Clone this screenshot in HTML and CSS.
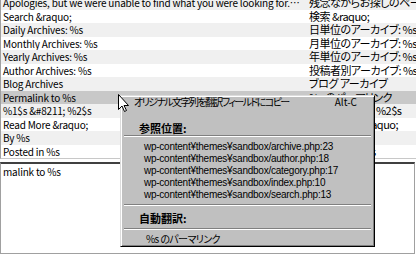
FILE: index.html
```html
<!DOCTYPE html>
<html lang="ja">
<head>
    <meta charset="UTF-8">
    <meta name="viewport" content="width=device-width, initial-scale=1.0">
    <title>翻訳エディタ</title>
    <link rel="stylesheet" href="styles.css">
</head>
<body>
    <div class="editor-window">
        <div class="string-list">
            <div class="row alt"><span class="original">Apologies, but we were unable to find what you were looking for. Perhaps searching will help.</span><span class="translation">残念ながらお探しのページが見つかりませんでした。</span></div>
            <div class="row"><span class="original">Search &amp;raquo;</span><span class="translation">検索 &amp;raquo;</span></div>
            <div class="row alt"><span class="original">Daily Archives: %s</span><span class="translation">日単位のアーカイブ: %s</span></div>
            <div class="row"><span class="original">Monthly Archives: %s</span><span class="translation">月単位のアーカイブ: %s</span></div>
            <div class="row alt"><span class="original">Yearly Archives: %s</span><span class="translation">年単位のアーカイブ: %s</span></div>
            <div class="row"><span class="original">Author Archives: %s</span><span class="translation">投稿者別アーカイブ: %s</span></div>
            <div class="row alt"><span class="original">Blog Archives</span><span class="translation">ブログ アーカイブ</span></div>
            <div class="row selected"><span class="original">Permalink to %s</span><span class="translation">%s のパーマリンク</span></div>
            <div class="row alt"><span class="original">%1$s &amp;#8211; %2$s</span><span class="translation">%1$s &amp;#8211; %2$s</span></div>
            <div class="row"><span class="original">Read More &amp;raquo;</span><span class="translation">続きを読む &amp;raquo;</span></div>
            <div class="row alt"><span class="original">By %s</span><span class="translation">投稿者: %s</span></div>
            <div class="row"><span class="original">Posted in %s</span><span class="translation">カテゴリー: %s</span></div>
        </div>
        <div class="text-field">malink to %s</div>

        <div class="context-menu">
            <div class="menu-item"><span>オリジナル文字列を翻訳フィールドにコピー</span><span class="shortcut">Alt-C</span></div>
            <div class="menu-heading first">参照位置:</div>
            <div class="menu-separator"></div>
            <div class="menu-paths">
                <div>wp-content¥themes¥sandbox/archive.php:23</div>
                <div>wp-content¥themes¥sandbox/author.php:18</div>
                <div>wp-content¥themes¥sandbox/category.php:17</div>
                <div>wp-content¥themes¥sandbox/index.php:10</div>
                <div>wp-content¥themes¥sandbox/search.php:13</div>
            </div>
            <div class="menu-separator"></div>
            <div class="menu-heading">自動翻訳:</div>
            <div class="menu-separator"></div>
            <div class="menu-item suggestion">%s のパーマリンク</div>
        </div>

        <svg class="cursor" width="12" height="19" viewBox="0 0 12 19">
            <path d="M0.5 0.5 V15.5 L4 12 L6.5 17.5 L8.5 16.5 L6 11.5 H10.5 Z" fill="#fff" stroke="#000" stroke-width="1"/>
        </svg>
    </div>
</body>
</html>
```

FILE: styles.css
```css
body {
    margin: 0;
    background-color: #fff;
    font-family: "Noto Sans CJK JP", sans-serif;
    font-size: 11px;
    color: #000;
}

.editor-window {
    position: relative;
    width: 416px;
    height: 255px;
    overflow: hidden;
    display: flex;
    flex-direction: column;
}

/* string list (original / translation) */
.string-list {
    margin-top: -4px;
    border-left: 1px solid #a0a0a0;
    border-bottom: 1px solid #c8c8c8;
}

.row {
    display: grid;
    grid-template-columns: 305px 1fr;
    height: 13.5px;
    line-height: 13px;
    white-space: nowrap;
}

.row span {
    overflow: hidden;
}

.row.alt {
    background-color: #f0f0f0;
}

.row.selected {
    background-color: #c8c8c8;
}

.original {
    padding-left: 2px;
    padding-right: 6px;
    font-size: 10px;
    letter-spacing: -0.2px;
    text-overflow: ellipsis;
}

.translation {
    padding-left: 3px;
    font-feature-settings: "palt";
    letter-spacing: -0.5px;
}

.text-field {
    flex: 1;
    margin: 3px 1px 1px 0;
    padding: 1px 2px;
    font-size: 10px;
    letter-spacing: -0.2px;
    line-height: 14px;
    border-top: 2px solid #404040;
    border-left: 1px solid #a0a0a0;
    border-right: 1px solid #a0a0a0;
    border-bottom: 1px solid #a0a0a0;
}

/* context menu */
.context-menu {
    position: absolute;
    left: 120px;
    top: 95px;
    width: 255px;
    box-sizing: border-box;
    padding: 0 2px;
    background-color: #c0c0c0;
    border: 1px solid;
    border-color: #dcdcdc #000 #000 #dcdcdc;
    box-shadow: inset 1px 1px #fff, inset -1px -1px #808080;
    font-feature-settings: "palt";
}

.menu-item {
    display: flex;
    justify-content: space-between;
    line-height: 12px;
    padding: 0 15px 0 11px;
    font-size: 10px;
    letter-spacing: -1.6px;
}

.menu-item .shortcut {
    letter-spacing: 0;
}

.menu-item.suggestion {
    padding-top: 2px;
    padding-left: 23px;
    line-height: 14px;
    letter-spacing: -0.6px;
}

.menu-heading {
    font-weight: bold;
    line-height: 14px;
    padding: 5px 0 3px 16px;
}

.menu-heading.first {
    padding-top: 13px;
    padding-bottom: 0;
}

.menu-separator {
    margin: 0 1px;
    border-top: 1px solid #808080;
    border-bottom: 1px solid #fff;
}

.menu-paths {
    padding: 4px 0 3px 21px;
    font-family: "Liberation Sans", sans-serif;
    font-size: 10px;
    letter-spacing: -0.25px;
    line-height: 12px;
    white-space: nowrap;
}

.cursor {
    position: absolute;
    left: 118px;
    top: 94px;
}
```
